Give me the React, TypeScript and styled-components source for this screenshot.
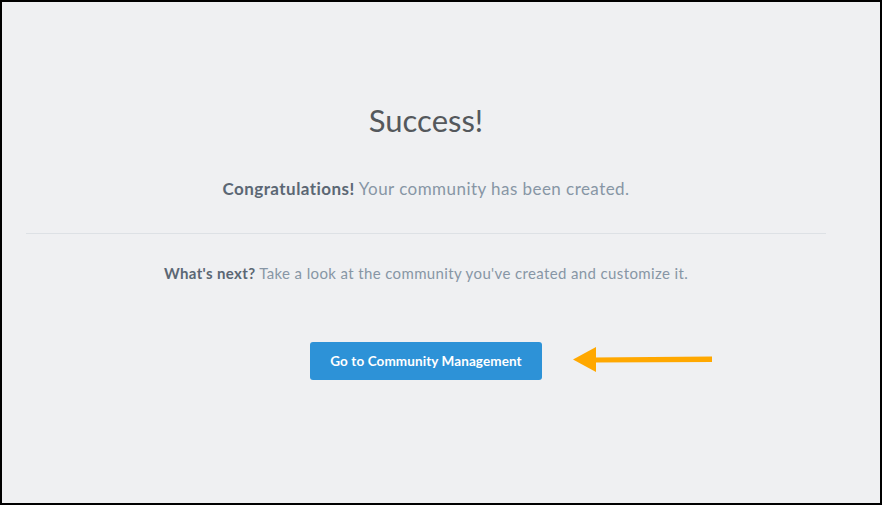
import React from "react";
import styled, { createGlobalStyle } from "styled-components";

const Global = createGlobalStyle`
  html, body { margin: 0; padding: 0; }
  body { font-family: "Lato", "Liberation Sans", sans-serif; }
`;

const Frame = styled.div`
  box-sizing: border-box;
  width: 882px;
  height: 505px;
  border: 2px solid #000;
  background: #eff0f2;
  padding-left: 24px;
`;

const Column = styled.div`
  width: 800px;
  display: flex;
  flex-direction: column;
  align-items: center;
`;

const Title = styled.h1`
  margin: 98px 0 0;
  font-size: 31px;
  font-weight: 400;
  color: #54585c;
  line-height: 40px;
`;

const Message = styled.p<{ $size: number; $spacing: number }>`
  margin: 0;
  font-size: ${(p) => p.$size}px;
  letter-spacing: ${(p) => p.$spacing}px;
  line-height: 20px;
  color: #8796a5;
  strong { color: #5b6774; font-weight: 700; }
`;

const Lead = styled(Message)`
  margin-top: 39px;
`;

const Divider = styled.hr`
  align-self: stretch;
  border: 0;
  border-top: 1px solid #dde1e5;
  margin: 34px 0 0;
`;

const Next = styled(Message)`
  margin-top: 29px;
`;

const ActionRow = styled.div`
  position: relative;
  margin-top: 59px;
`;

const Button = styled.button`
  width: 232px;
  height: 38px;
  border: 0;
  border-radius: 3px;
  background: #2d92d7;
  color: #fff;
  font-family: "Lato", "Liberation Sans", sans-serif;
  font-weight: 700;
  font-size: 13.5px;
  letter-spacing: 0.1px;
  cursor: pointer;
`;

const Arrow = styled.svg`
  position: absolute;
  left: 263px;
  top: 4px;
`;

export default function App() {
  return (
    <>
      <Global />
      <Frame>
        <Column>
          <Title>Success!</Title>
          <Lead $size={17} $spacing={0.45}>
            <strong>Congratulations!</strong> Your community has been created.
          </Lead>
          <Divider />
          <Next $size={15} $spacing={0.37}>
            <strong>What's next?</strong> Take a look at the community you've created and customize it.
          </Next>
          <ActionRow>
            <Button>Go to Community Management</Button>
            <Arrow width="140" height="28" viewBox="0 0 140 28">
              <path d="M0 13.5 L23 1 L23 26 Z" fill="#ffa800" />
              <path d="M20 11.5 L139 10.5 L139 16 L20 16.5 Z" fill="#ffa800" />
            </Arrow>
          </ActionRow>
        </Column>
      </Frame>
    </>
  );
}
